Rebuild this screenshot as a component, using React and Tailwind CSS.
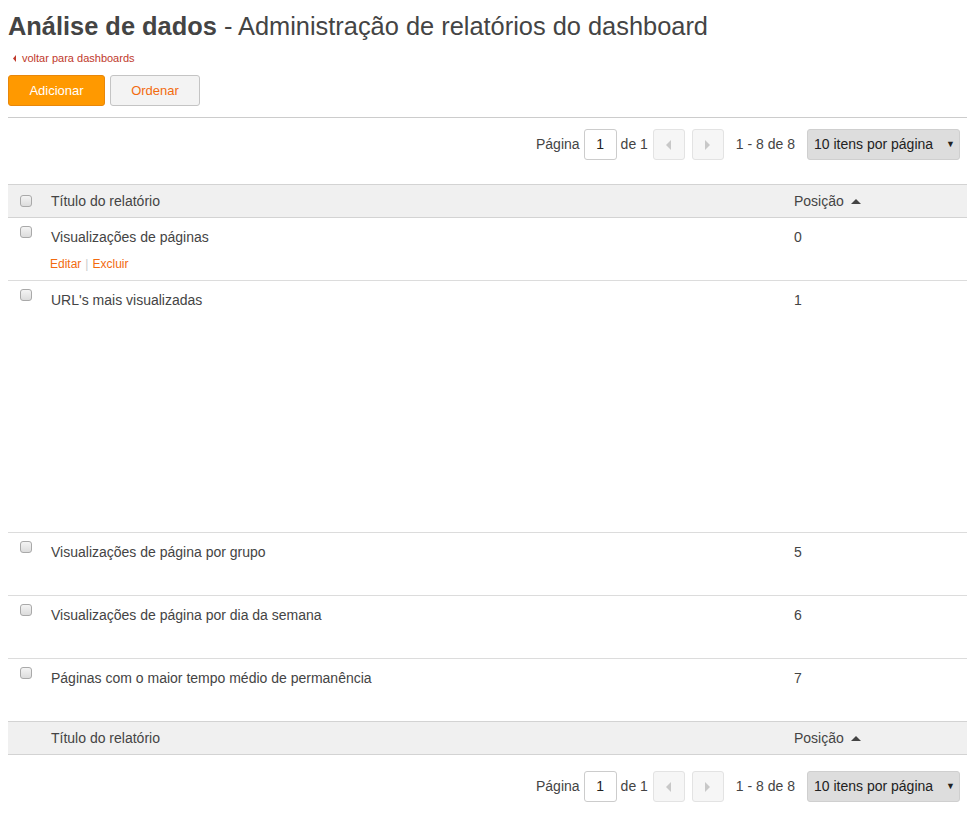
import React from 'react';

const rows = [
  { title: 'Visualizações de páginas', pos: 0, actions: true, h: 'h-[63px]' },
  { title: "URL's mais visualizadas", pos: 1, h: 'h-[252px]' },
  { title: 'Visualizações de página por grupo', pos: 5, h: 'h-[63px]' },
  { title: 'Visualizações de página por dia da semana', pos: 6, h: 'h-[63px]' },
  { title: 'Páginas com o maior tempo médio de permanência', pos: 7, h: 'h-[63px]' },
];

function Checkbox() {
  return (
    <span className="block w-[12px] h-[12px] rounded-[3px] border border-[#a9a9a9] bg-gradient-to-b from-[#f4f4f4] to-[#dcdcdc]" />
  );
}

function SortUp() {
  return (
    <svg width="10" height="5" viewBox="0 0 10 5" className="ml-[7px]">
      <path d="M0 5 L5 0 L10 5 Z" fill="#444" />
    </svg>
  );
}

function Pager() {
  return (
    <div className="flex items-center justify-end pr-[7px] text-[14px] text-[#444]">
      <span>Página</span>
      <div className="ml-[4px] w-[33px] h-[31px] border border-[#ccc] rounded-[3px] bg-white flex items-center justify-center text-[#222]">1</div>
      <span className="ml-[4px]">de 1</span>
      <button className="ml-[5px] w-[32px] h-[31px] border border-[#e3e3e3] rounded-[3px] bg-[#f6f6f6] flex items-center justify-center">
        <svg width="5" height="10" viewBox="0 0 5 10"><path d="M5 0 L0 5 L5 10 Z" fill="#c8c8c8" /></svg>
      </button>
      <button className="ml-[7px] w-[32px] h-[31px] border border-[#e3e3e3] rounded-[3px] bg-[#f6f6f6] flex items-center justify-center">
        <svg width="5" height="10" viewBox="0 0 5 10"><path d="M0 0 L5 5 L0 10 Z" fill="#c8c8c8" /></svg>
      </button>
      <span className="ml-[12px]">1 - 8 de 8</span>
      <div className="ml-[12px] w-[153px] h-[31px] bg-[#dddddd] border border-[#cfcfcf] rounded-[3px] flex items-center justify-between pl-[6px] pr-[4px] text-[#222]">
        <span>10 itens por página</span>
        <span className="text-[9px]">▼</span>
      </div>
    </div>
  );
}

function HeaderRow({ withCheck }) {
  return (
    <div className="grid grid-cols-[35px_1fr_181px] h-[34px] items-center bg-[#f0f0f0] border-y border-[#d3d3d3] text-[14px] text-[#444]">
      <div className="pl-[12px]">{withCheck && <Checkbox />}</div>
      <div className="pl-[8px]">Título do relatório</div>
      <div className="pl-[8px] flex items-center">
        Posição
        <SortUp />
      </div>
    </div>
  );
}

export default function App() {
  return (
    <div className="px-[8px] bg-white min-h-screen text-[#444]" style={{ fontFamily: '"Liberation Sans", Arial, sans-serif' }}>
      <h1 className="pt-[10px] text-[25.4px] leading-[32px] text-[#444]">
        <span className="font-bold">Análise de dados</span>
        <span> - Administração de relatórios do dashboard</span>
      </h1>
      <a className="mt-[9px] flex items-center text-[11px] leading-[14px] text-[#c0392b] pl-[5px]">
        <svg width="3" height="7" viewBox="0 0 3 7" className="mr-[6px]"><path d="M3 0 L0 3.5 L3 7 Z" fill="#c0392b" /></svg>
        voltar para dashboards
      </a>
      <div className="mt-[10px] flex gap-[5px]">
        <button className="w-[97px] h-[31px] rounded-[3px] bg-[#ff9900] border border-[#e8870a] text-white text-[13px]">Adicionar</button>
        <button className="w-[90px] h-[31px] rounded-[3px] bg-[#f3f3f3] border border-[#c4c4c4] text-[#f26b0f] text-[13px]">Ordenar</button>
      </div>
      <div className="mt-[11px] border-t border-[#cccccc]" />
      <div className="mt-[11px]"><Pager /></div>
      <div className="mt-[24px]">
        <HeaderRow withCheck />
        {rows.map((r) => (
          <div key={r.title} className={`grid grid-cols-[35px_1fr_181px] ${r.h} border-b border-[#dcdcdc] text-[14px] text-[#444]`}>
            <div className="pl-[12px] pt-[8px]"><Checkbox /></div>
            <div className="pl-[8px] pt-[9px] leading-[20px]">
              <div>{r.title}</div>
              {r.actions && (
                <div className="mt-[9px] text-[12px] leading-[16px] -ml-[1px]">
                  <span className="text-[#f26b0f]">Editar</span>
                  <span className="text-[#ccc] mx-[4px]">|</span>
                  <span className="text-[#f26b0f]">Excluir</span>
                </div>
              )}
            </div>
            <div className="pl-[8px] pt-[9px] leading-[20px]">{r.pos}</div>
          </div>
        ))}
        <div className="-mt-[1px]"><HeaderRow /></div>
      </div>
      <div className="mt-[16px]"><Pager /></div>
    </div>
  );
}
